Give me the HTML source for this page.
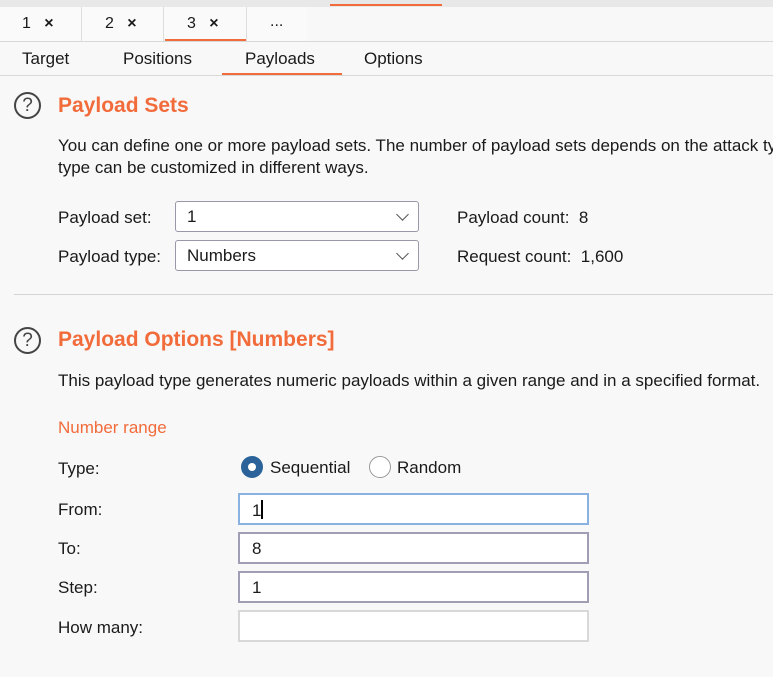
<!DOCTYPE html>
<html><head><style>
html,body{margin:0;width:773px;height:677px;overflow:hidden}
body{background:#f8f8f8;font-family:"Liberation Sans",sans-serif;font-size:17px;color:#1a1a1a;position:relative}
.a{position:absolute;white-space:nowrap}
.or{color:#f26b3a;font-weight:bold;font-size:20px}
.box{position:absolute;background:#fff;border:1px solid #9a98a8;border-radius:3px;box-sizing:border-box}
.inp{position:absolute;background:#fff;border:2px solid #a09eb4;box-sizing:border-box;left:238px;width:351px;height:32px;padding:5px 12px}
.q{position:absolute;width:27px;height:27px;border:2px solid #444;border-radius:50%;box-sizing:border-box;text-align:center;font-size:19px;line-height:23px;color:#444}
.chev{position:absolute;width:8px;height:8px;border-right:1.5px solid #555;border-bottom:1.5px solid #555;transform:rotate(45deg)}
.clip{position:absolute;left:0;top:0;width:773px;height:677px;overflow:hidden}
</style></head><body><div class="clip">
<div class="a" style="left:0;top:0;width:773px;height:7px;background:#e8e8e8"></div>
<div class="a" style="left:330px;top:4px;width:112px;height:2px;background:#f26b3a"></div>
<div class="a" style="left:0;top:7px;width:307px;height:34px;background:#fafafa"></div>
<div class="a" style="left:81px;top:7px;width:1px;height:34px;background:#ddd"></div>
<div class="a" style="left:163px;top:7px;width:1px;height:34px;background:#ddd"></div>
<div class="a" style="left:246px;top:7px;width:1px;height:34px;background:#ddd"></div>
<div class="a" style="left:22px;top:15px;font-size:16px">1 &nbsp;&nbsp;<b>×</b></div>
<div class="a" style="left:105px;top:15px;font-size:16px">2 &nbsp;&nbsp;<b>×</b></div>
<div class="a" style="left:187px;top:15px;font-size:16px">3 &nbsp;&nbsp;<b>×</b></div>
<div class="a" style="left:270px;top:13px;font-size:16px">...</div>
<div class="a" style="left:165px;top:39px;width:81px;height:2px;background:#f26b3a"></div>
<div class="a" style="left:0;top:41px;width:773px;height:1px;background:#d8d8d8"></div>
<div class="a" style="left:22px;top:49px">Target</div>
<div class="a" style="left:123px;top:49px">Positions</div>
<div class="a" style="left:245px;top:49px">Payloads</div>
<div class="a" style="left:364px;top:49px">Options</div>
<div class="a" style="left:222px;top:73px;width:120px;height:2px;background:#f26b3a"></div>
<div class="a" style="left:0;top:75px;width:773px;height:1px;background:#d8d8d8"></div>
<div class="q" style="left:14px;top:92px">?</div>
<div class="a or" style="left:58px;top:94px;font-size:21px">Payload Sets</div>
<div class="a" style="left:58px;top:136px">You can define one or more payload sets. The number of payload sets depends on the attack type defined in the Positions tab.</div>
<div class="a" style="left:58px;top:158px">type can be customized in different ways.</div>
<div class="a" style="left:58px;top:208px">Payload set:</div>
<div class="box" style="left:175px;top:201px;width:244px;height:31px"><span class="a" style="left:11px;top:5px">1</span></div>
<div class="chev" style="left:398px;top:210px"></div>
<div class="a" style="left:58px;top:247px">Payload type:</div>
<div class="box" style="left:175px;top:240px;width:244px;height:31px"><span class="a" style="left:11px;top:5px">Numbers</span></div>
<div class="chev" style="left:398px;top:249px"></div>
<div class="a" style="left:457px;top:208px">Payload count: &nbsp;8</div>
<div class="a" style="left:457px;top:247px">Request count: &nbsp;1,600</div>
<div class="a" style="left:14px;top:294px;width:759px;height:1px;background:#d4d4d4"></div>
<div class="q" style="left:14px;top:327px">?</div>
<div class="a or" style="left:58px;top:328px;font-size:21px">Payload Options [Numbers]</div>
<div class="a" style="left:58px;top:371px">This payload type generates numeric payloads within a given range and in a specified format.</div>
<div class="a" style="left:58px;top:418px;color:#f26b3a">Number range</div>
<div class="a" style="left:58px;top:459px">Type:</div>
<div class="a" style="left:241px;top:456px;width:22px;height:22px;border-radius:50%;background:#2b6299"></div>
<div class="a" style="left:248px;top:463px;width:8px;height:8px;border-radius:50%;background:#fff"></div>
<div class="a" style="left:270px;top:458px">Sequential</div>
<div class="a" style="left:369px;top:456px;width:20px;height:20px;border-radius:50%;border:1px solid #999;background:#fff"></div>
<div class="a" style="left:397px;top:458px">Random</div>
<div class="a" style="left:58px;top:500px">From:</div>
<div class="inp" style="top:493px;border-color:#8ab2e0">1<span style="display:inline-block;width:2px;height:19px;background:#000;vertical-align:-3px"></span></div>
<div class="a" style="left:58px;top:539px">To:</div>
<div class="inp" style="top:532px">8</div>
<div class="a" style="left:58px;top:578px">Step:</div>
<div class="inp" style="top:571px">1</div>
<div class="a" style="left:58px;top:618px">How many:</div>
<div class="inp" style="top:610px;border-color:#d8d8d8"></div>
</div></body></html>
